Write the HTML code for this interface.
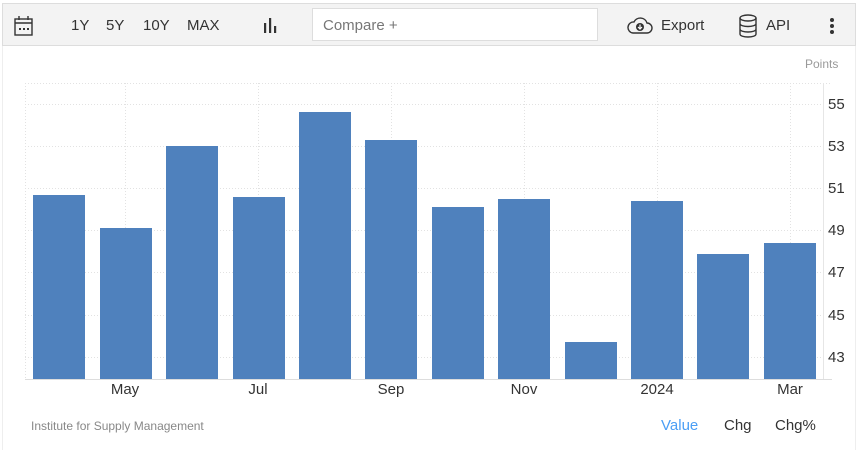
<!DOCTYPE html>
<html><head><style>
body{margin:0;width:857px;height:450px;background:#fff;font-family:"Liberation Sans",sans-serif;overflow:hidden;position:relative}
.tb{position:absolute;left:2px;top:3px;width:852px;height:41px;background:#f3f3f3;border:1px solid #ddd}
.t{position:absolute;font-size:15px;color:#333;top:17px}
.cmp{position:absolute;left:312px;top:8px;width:286px;height:33px;background:#fff;border:1px solid #ddd;box-sizing:border-box}
.frame{position:absolute;left:2px;top:45px;width:852px;height:405px;border-left:1px solid #eee;border-right:1px solid #eee}
</style></head><body>
<div class="frame"></div>
<div class="tb"></div>
<svg style="position:absolute;left:14px;top:15px" width="20" height="22" viewBox="0 0 20 22"><rect x="1" y="4" width="17" height="16" fill="none" stroke="#333" stroke-width="1.4"/><line x1="1" y1="8" x2="18" y2="8" stroke="#333" stroke-width="1.4"/><line x1="5" y1="1" x2="5" y2="5" stroke="#333" stroke-width="1.4"/><line x1="14" y1="1" x2="14" y2="5" stroke="#333" stroke-width="1.4"/><rect x="5" y="13" width="2" height="2" fill="#333"/><rect x="9" y="13" width="2" height="2" fill="#333"/><rect x="13" y="13" width="2" height="2" fill="#333"/></svg>
<span class="t" style="left:71px">1Y</span><span class="t" style="left:106px">5Y</span><span class="t" style="left:143px">10Y</span><span class="t" style="left:187px">MAX</span>
<svg style="position:absolute;left:263px;top:17px" width="16" height="16"><rect x="1" y="6" width="2.2" height="10" fill="#333"/><rect x="6" y="1" width="2.2" height="15" fill="#333"/><rect x="11" y="9" width="2.2" height="7" fill="#333"/></svg>
<div class="cmp"></div><span class="t" style="left:323px;color:#777">Compare +</span>
<svg style="position:absolute;left:627px;top:16px" width="26" height="20" viewBox="0 0 26 20"><path d="M6 17 H20 A5 5 0 0 0 20 7 A7 7 0 0 0 7 6 A5.5 5.5 0 0 0 6 17 Z" fill="none" stroke="#333" stroke-width="1.4"/><circle cx="13" cy="11" r="4" fill="#333"/><path d="M13 8.5v4M11 11l2 2 2-2" stroke="#fff" stroke-width="1.2" fill="none"/></svg>
<span class="t" style="left:661px">Export</span>
<svg style="position:absolute;left:738px;top:14px" width="20" height="24" viewBox="0 0 20 24"><ellipse cx="10" cy="4" rx="8" ry="3" fill="none" stroke="#333" stroke-width="1.4"/><path d="M2 4v16c0 4 16 4 16 0V4M2 9.5c0 4 16 4 16 0M2 15c0 4 16 4 16 0" fill="none" stroke="#333" stroke-width="1.4"/></svg>
<span class="t" style="left:766px">API</span>
<svg style="position:absolute;left:829px;top:17px" width="6" height="18"><circle cx="3" cy="3" r="2" fill="#333"/><circle cx="3" cy="9" r="2" fill="#333"/><circle cx="3" cy="15" r="2" fill="#333"/></svg>
<svg style="position:absolute;left:0;top:0" width="857" height="450" font-family="Liberation Sans, sans-serif">
<g stroke="#e2e2e2" stroke-dasharray="1,2" stroke-width="1">
<line x1="25" y1="83.5" x2="832" y2="83.5"/><line x1="25" y1="104.5" x2="823" y2="104.5"/><line x1="25" y1="146.5" x2="823" y2="146.5"/><line x1="25" y1="188.5" x2="823" y2="188.5"/><line x1="25" y1="230.5" x2="823" y2="230.5"/><line x1="25" y1="272.5" x2="823" y2="272.5"/><line x1="25" y1="315.5" x2="823" y2="315.5"/><line x1="25" y1="357.5" x2="823" y2="357.5"/>
<line x1="25.5" y1="83" x2="25.5" y2="379"/><line x1="125.5" y1="83" x2="125.5" y2="379"/><line x1="258.5" y1="83" x2="258.5" y2="379"/><line x1="391.5" y1="83" x2="391.5" y2="379"/><line x1="524.5" y1="83" x2="524.5" y2="379"/><line x1="657.5" y1="83" x2="657.5" y2="379"/><line x1="790.5" y1="83" x2="790.5" y2="379"/>
</g>
<line x1="823.5" y1="83" x2="823.5" y2="379" stroke="#e6e6e6"/>
<g fill="#4f81bd">
<rect x="33" y="195" width="52" height="184"/><rect x="100" y="228" width="52" height="151"/><rect x="166" y="146" width="52" height="233"/><rect x="233" y="197" width="52" height="182"/><rect x="299" y="112" width="52" height="267"/><rect x="365" y="140" width="52" height="239"/><rect x="432" y="207" width="52" height="172"/><rect x="498" y="199" width="52" height="180"/><rect x="565" y="342" width="52" height="37"/><rect x="631" y="201" width="52" height="178"/><rect x="697" y="254" width="52" height="125"/><rect x="764" y="243" width="52" height="136"/>
</g>
<line x1="25" y1="379.5" x2="832" y2="379.5" stroke="#ddd"/>
<g font-size="15" fill="#333" text-anchor="middle">
<text x="125" y="394">May</text><text x="258" y="394">Jul</text><text x="391" y="394">Sep</text><text x="524" y="394">Nov</text><text x="657" y="394">2024</text><text x="790" y="394">Mar</text>
</g>
<g font-size="15" fill="#333">
<text x="828" y="109">55</text><text x="828" y="151">53</text><text x="828" y="193">51</text><text x="828" y="235">49</text><text x="828" y="277">47</text><text x="828" y="320">45</text><text x="828" y="362">43</text>
</g>
<text x="805" y="68" font-size="12" fill="#999">Points</text>
<text x="31" y="430" font-size="12" fill="#888">Institute for Supply Management</text>
<text x="661" y="430" font-size="15" fill="#4a9ef5">Value</text>
<text x="724" y="430" font-size="15" fill="#333">Chg</text>
<text x="775" y="430" font-size="15" fill="#333">Chg%</text>
</svg>
</body></html>
